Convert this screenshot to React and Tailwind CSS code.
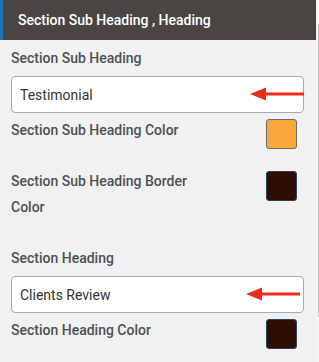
import React from 'react';

const Arrow = ({ className }) => (
  <svg className={className} width="54" height="14" viewBox="0 0 54 14">
    <polygon points="0,7 16,0.5 16,13.5" fill="#ee2b1c" />
    <rect x="14" y="5.5" width="40" height="3" fill="#ee2b1c" />
  </svg>
);

const TextField = ({ value, arrowClass }) => (
  <div className="relative mt-[5px] h-[37px] w-full rounded-[4px] border border-[#a9a9a9] bg-white">
    <input
      readOnly
      value={value}
      className="h-full w-full bg-transparent pl-[8px] text-[14px] text-[#333] outline-none"
    />
    <Arrow className={arrowClass} />
  </div>
);

const ColorRow = ({ label, color, border, labelClass = '' }) => (
  <div className="flex items-start justify-between">
    <span className={`text-[14px] font-medium leading-[26px] text-[#505050] ${labelClass}`}>{label}</span>
    <span
      className={`mr-[7px] h-[30px] w-[31px] shrink-0 rounded-[3px] border ${color} ${border}`}
    />
  </div>
);

export default function App() {
  return (
    <div className="flex h-[362px] w-[319px] bg-[#f1f1f1] font-['Roboto',sans-serif]">
      <div className="flex w-[316px] flex-col">
        {/* Heading bar */}
        <div className="flex h-[40px] items-center border-l-[3px] border-[#1f70b8] bg-[#4a4543] pl-[15px]">
          <span className="text-[14px] font-medium text-white">Section Sub Heading , Heading</span>
        </div>

        <div className="flex flex-col pl-[11px] pr-[12px] pt-[5px]">
          <span className="text-[14px] font-medium leading-[26px] text-[#505050]">Section Sub Heading</span>
          <TextField value="Testimonial" arrowClass="absolute right-[-1px] top-[10px]" />

          <div className="mt-[4px]">
            <ColorRow
              label="Section Sub Heading Color"
              color="bg-[#f9a73b]"
              border="mt-[2px] border-[#6b6b6b]"
            />
          </div>

          <div className="mt-[19px]">
            <ColorRow
              label="Section Sub Heading Border Color"
              color="bg-[#2e0d06]"
              border="mt-[3px] border-[#2f4157]"
              labelClass="w-[200px]"
            />
          </div>

          <span className="mt-[25px] text-[14px] font-medium leading-[26px] text-[#505050]">Section Heading</span>
          <TextField value="Clients Review" arrowClass="absolute right-[3px] top-[10px]" />

          <div className="mt-[4px]">
            <ColorRow
              label="Section Heading Color"
              color="bg-[#2e0d06]"
              border="mt-[2px] border-[#2f4157]"
            />
          </div>
        </div>
      </div>

      {/* scrollbar */}
      <div className="flex w-[3px] flex-col bg-[#f4f4f4]">
        <div className="ml-[2px] mt-[24px] h-[293px] w-[1px] bg-[#c4c4c4]" />
      </div>
    </div>
  );
}
